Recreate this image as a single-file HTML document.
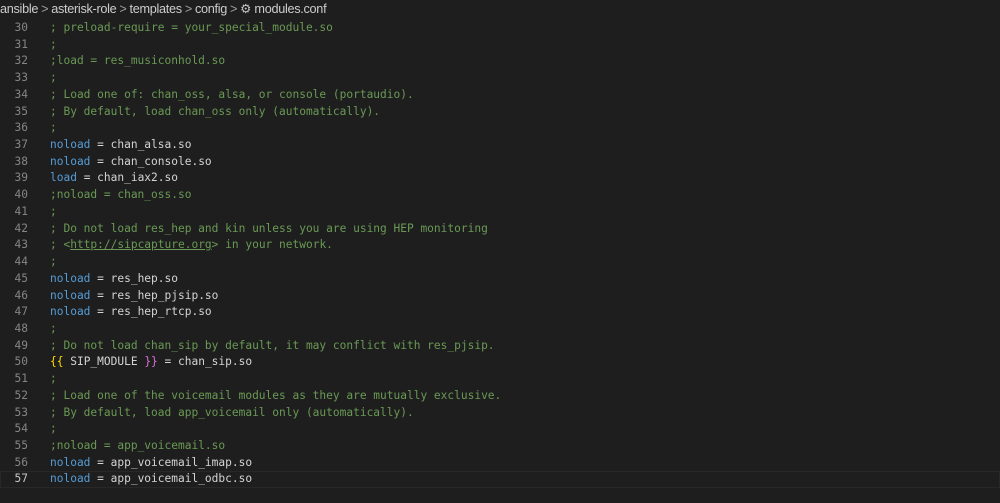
<!DOCTYPE html>
<html><head><meta charset="utf-8"><style>
html,body{margin:0;padding:0;background:#1e1e1e;width:1000px;height:503px;overflow:hidden}
.bc{position:absolute;left:0;top:0;height:19px;width:1000px;font:12.7px "Liberation Sans",sans-serif;color:#cccccc;line-height:18px;white-space:nowrap;letter-spacing:-0.3px}
.bc .s{color:#a0a0a0;margin:0 3px}
.ed{position:absolute;left:0;top:20px;width:1000px;font:11.2px "DejaVu Sans Mono",monospace}
.l{height:16.72px;line-height:16.72px;white-space:pre;position:relative}
.n{position:absolute;left:0;width:28px;text-align:right;color:#858585}
.t{position:absolute;left:50px;color:#d4d4d4}
.c{color:#6a9955}.k{color:#569cd6}.y{color:#ffd700}.p{color:#da70d6}
.cur{outline:1px solid #282828;outline-offset:-1px}
.cur .n{color:#c6c6c6}
u{text-decoration-color:#6a9955}
</style></head><body>
<div class="bc">ansible<span class="s">&gt;</span>asterisk-role<span class="s">&gt;</span>templates<span class="s">&gt;</span>config<span class="s">&gt;</span><span style="color:#c5c5c5">⚙</span> modules.conf</div>
<div class="ed">
<div class="l"><span class="n">30</span><span class="t c">; preload-require = your_special_module.so</span></div>
<div class="l"><span class="n">31</span><span class="t c">;</span></div>
<div class="l"><span class="n">32</span><span class="t c">;load = res_musiconhold.so</span></div>
<div class="l"><span class="n">33</span><span class="t c">;</span></div>
<div class="l"><span class="n">34</span><span class="t c">; Load one of: chan_oss, alsa, or console (portaudio).</span></div>
<div class="l"><span class="n">35</span><span class="t c">; By default, load chan_oss only (automatically).</span></div>
<div class="l"><span class="n">36</span><span class="t c">;</span></div>
<div class="l"><span class="n">37</span><span class="t"><span class="k">noload</span> = chan_alsa.so</span></div>
<div class="l"><span class="n">38</span><span class="t"><span class="k">noload</span> = chan_console.so</span></div>
<div class="l"><span class="n">39</span><span class="t"><span class="k">load</span> = chan_iax2.so</span></div>
<div class="l"><span class="n">40</span><span class="t c">;noload = chan_oss.so</span></div>
<div class="l"><span class="n">41</span><span class="t c">;</span></div>
<div class="l"><span class="n">42</span><span class="t c">; Do not load res_hep and kin unless you are using HEP monitoring</span></div>
<div class="l"><span class="n">43</span><span class="t c">; &lt;<u>http://sipcapture.org</u>&gt; in your network.</span></div>
<div class="l"><span class="n">44</span><span class="t c">;</span></div>
<div class="l"><span class="n">45</span><span class="t"><span class="k">noload</span> = res_hep.so</span></div>
<div class="l"><span class="n">46</span><span class="t"><span class="k">noload</span> = res_hep_pjsip.so</span></div>
<div class="l"><span class="n">47</span><span class="t"><span class="k">noload</span> = res_hep_rtcp.so</span></div>
<div class="l"><span class="n">48</span><span class="t c">;</span></div>
<div class="l"><span class="n">49</span><span class="t c">; Do not load chan_sip by default, it may conflict with res_pjsip.</span></div>
<div class="l"><span class="n">50</span><span class="t"><span class="y">{{</span> SIP_MODULE <span class="p">}}</span> = chan_sip.so</span></div>
<div class="l"><span class="n">51</span><span class="t c">;</span></div>
<div class="l"><span class="n">52</span><span class="t c">; Load one of the voicemail modules as they are mutually exclusive.</span></div>
<div class="l"><span class="n">53</span><span class="t c">; By default, load app_voicemail only (automatically).</span></div>
<div class="l"><span class="n">54</span><span class="t c">;</span></div>
<div class="l"><span class="n">55</span><span class="t c">;noload = app_voicemail.so</span></div>
<div class="l"><span class="n">56</span><span class="t"><span class="k">noload</span> = app_voicemail_imap.so</span></div>
<div class="l cur"><span class="n">57</span><span class="t"><span class="k">noload</span> = app_voicemail_odbc.so</span></div>
</div>
</body></html>
